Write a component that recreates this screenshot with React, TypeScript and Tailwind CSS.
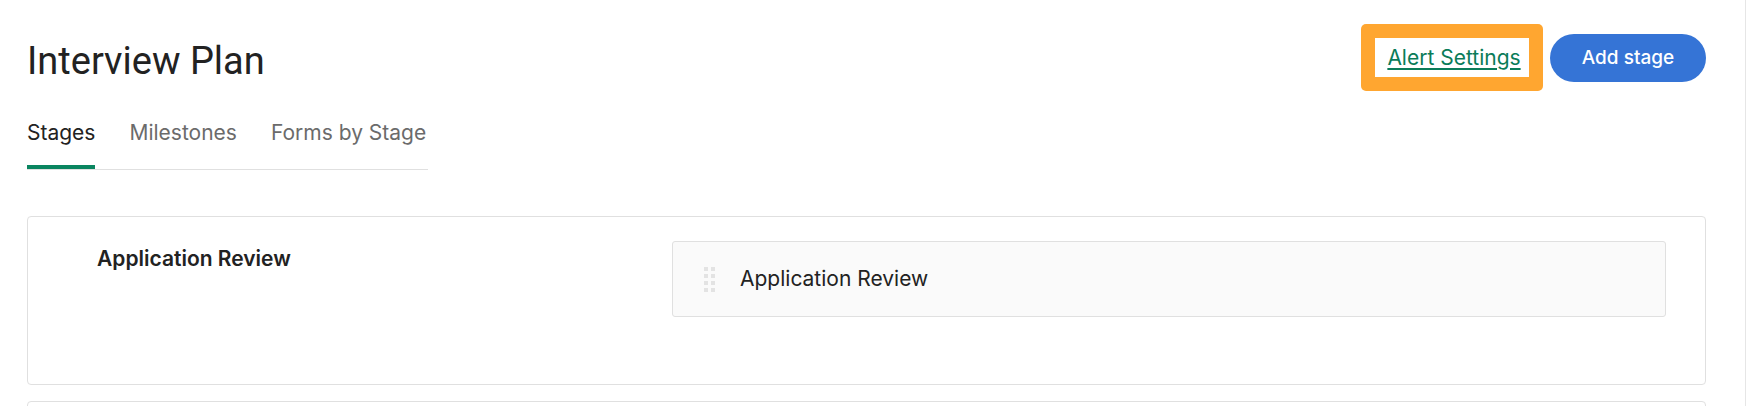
import React from "react";

function DragHandle() {
  const dots = [0, 1, 2, 3];
  return (
    <div className="flex flex-col gap-[3px]">
      {dots.map((r) => (
        <div key={r} className="flex gap-[3px]">
          <span className="block h-[4px] w-[4px] bg-[#e3e3e3]" />
          <span className="block h-[4px] w-[4px] bg-[#e3e3e3]" />
        </div>
      ))}
    </div>
  );
}

export default function App() {
  return (
    <div
      className="h-[406px] w-[1750px] overflow-hidden bg-white text-[#222222]"
      style={{ fontFamily: "Inter, 'Liberation Sans', sans-serif" }}
    >
      <div className="h-full w-[1746px] border-r border-[#e6e6e6] pl-[27px] pr-[39px]">
        {/* Header */}
        <div className="flex h-[90px] items-start justify-between">
          <h1
            className="mt-[39px] text-[38px] leading-[44px] font-normal text-[#222222]"
            style={{ fontFamily: "Roboto, 'Liberation Sans', sans-serif" }}
          >
            Interview Plan
          </h1>
          <div className="mt-[24px] flex items-center gap-[7px]">
            <div className="rounded-[5px] bg-[#ffa630] p-[14px]">
              <div className="flex h-[39px] w-[154px] items-center justify-center bg-white pl-[4px]">
                <a
                  href="#"
                  className="text-[21px] leading-[26px] text-[#0a7c59] underline underline-offset-[3px] decoration-[1.5px]"
                >
                  Alert Settings
                </a>
              </div>
            </div>
            <button className="flex h-[48px] w-[156px] items-center justify-center rounded-full bg-[#3574d6] text-[19px] font-medium leading-[24px] text-white">
              Add stage
            </button>
          </div>
        </div>

        {/* Tabs */}
        <div className="mt-[31px] inline-flex gap-[34px] border-b border-[#e0e0e0] pr-[2px]">
          <div className="border-b-[4px] border-[#0a8560] pb-[20px] text-[21px] leading-[24px] text-[#222222]">
            Stages
          </div>
          <div className="pb-[24px] text-[21px] leading-[24px] text-[#6b6b6b]">
            Milestones
          </div>
          <div className="pb-[24px] text-[21px] leading-[24px] text-[#6b6b6b]">
            Forms by Stage
          </div>
        </div>

        {/* Cards */}
        <div className="mt-[46px] flex flex-col gap-[16px]">
          <div className="flex h-[169px] rounded-[4px] border border-[#e0e0e0] pt-[24px] pr-[39px]">
            <div className="w-[644px] shrink-0 pl-[69px] pt-[6px]">
              <div className="text-[21px] font-semibold leading-[24px] text-[#222222]">
                Application Review
              </div>
            </div>
            <div className="flex h-[76px] flex-1 items-center gap-[25px] rounded-[3px] border border-[#e0e0e0] bg-[#fafafa] pl-[31px]">
              <DragHandle />
              <span className="text-[21px] leading-[24px] text-[#222222]">
                Application Review
              </span>
            </div>
          </div>
          <div className="h-[100px] rounded-[4px] border border-[#e0e0e0]" />
        </div>
      </div>
    </div>
  );
}
